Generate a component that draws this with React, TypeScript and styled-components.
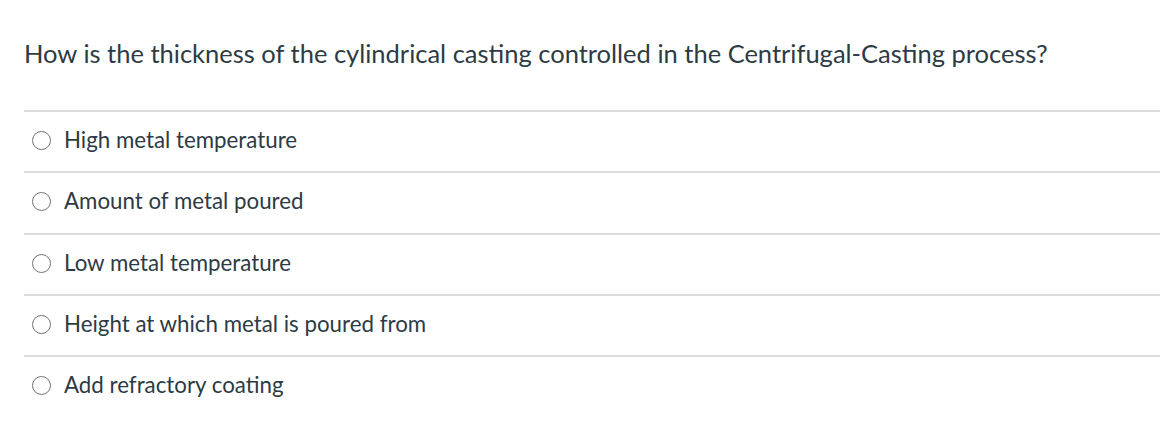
import React from 'react';
import styled, { createGlobalStyle } from 'styled-components';

const GlobalStyle = createGlobalStyle`
  body {
    margin: 0;
    background: #fff;
    font-family: Lato, "Liberation Sans", sans-serif;
    color: #2d3b45;
  }
`;

const Wrapper = styled.div`
  width: 1160px;
  height: 448px;
  padding: 36px 0 0 24px;
  box-sizing: border-box;
`;

const Question = styled.p`
  margin: 0;
  font-size: 25.5px;
  line-height: 34px;
  font-weight: 400;
`;

const Answers = styled.ul`
  list-style: none;
  margin: 40px 0 0;
  padding: 0;
`;

const Answer = styled.li`
  display: flex;
  align-items: center;
  height: 61.3px;
  border-top: 2px solid #dcdcdc;
  box-sizing: border-box;
  padding: 0 0 4px 8px;
`;

const Radio = styled.span`
  width: 19px;
  height: 19px;
  margin-top: 2px;
  border: 1.5px solid #737373;
  border-radius: 50%;
  box-sizing: border-box;
  flex-shrink: 0;
`;

const Label = styled.span`
  margin-left: 13px;
  font-size: 22.3px;
`;

const answers = [
  'High metal temperature',
  'Amount of metal poured',
  'Low metal temperature',
  'Height at which metal is poured from',
  'Add refractory coating',
];

function App() {
  return (
    <>
      <GlobalStyle />
      <Wrapper>
        <Question>
          How is the thickness of the cylindrical casting controlled in the Centrifugal-Casting process?
        </Question>
        <Answers>
          {answers.map((a) => (
            <Answer key={a}>
              <Radio />
              <Label>{a}</Label>
            </Answer>
          ))}
        </Answers>
      </Wrapper>
    </>
  );
}

export default App;
